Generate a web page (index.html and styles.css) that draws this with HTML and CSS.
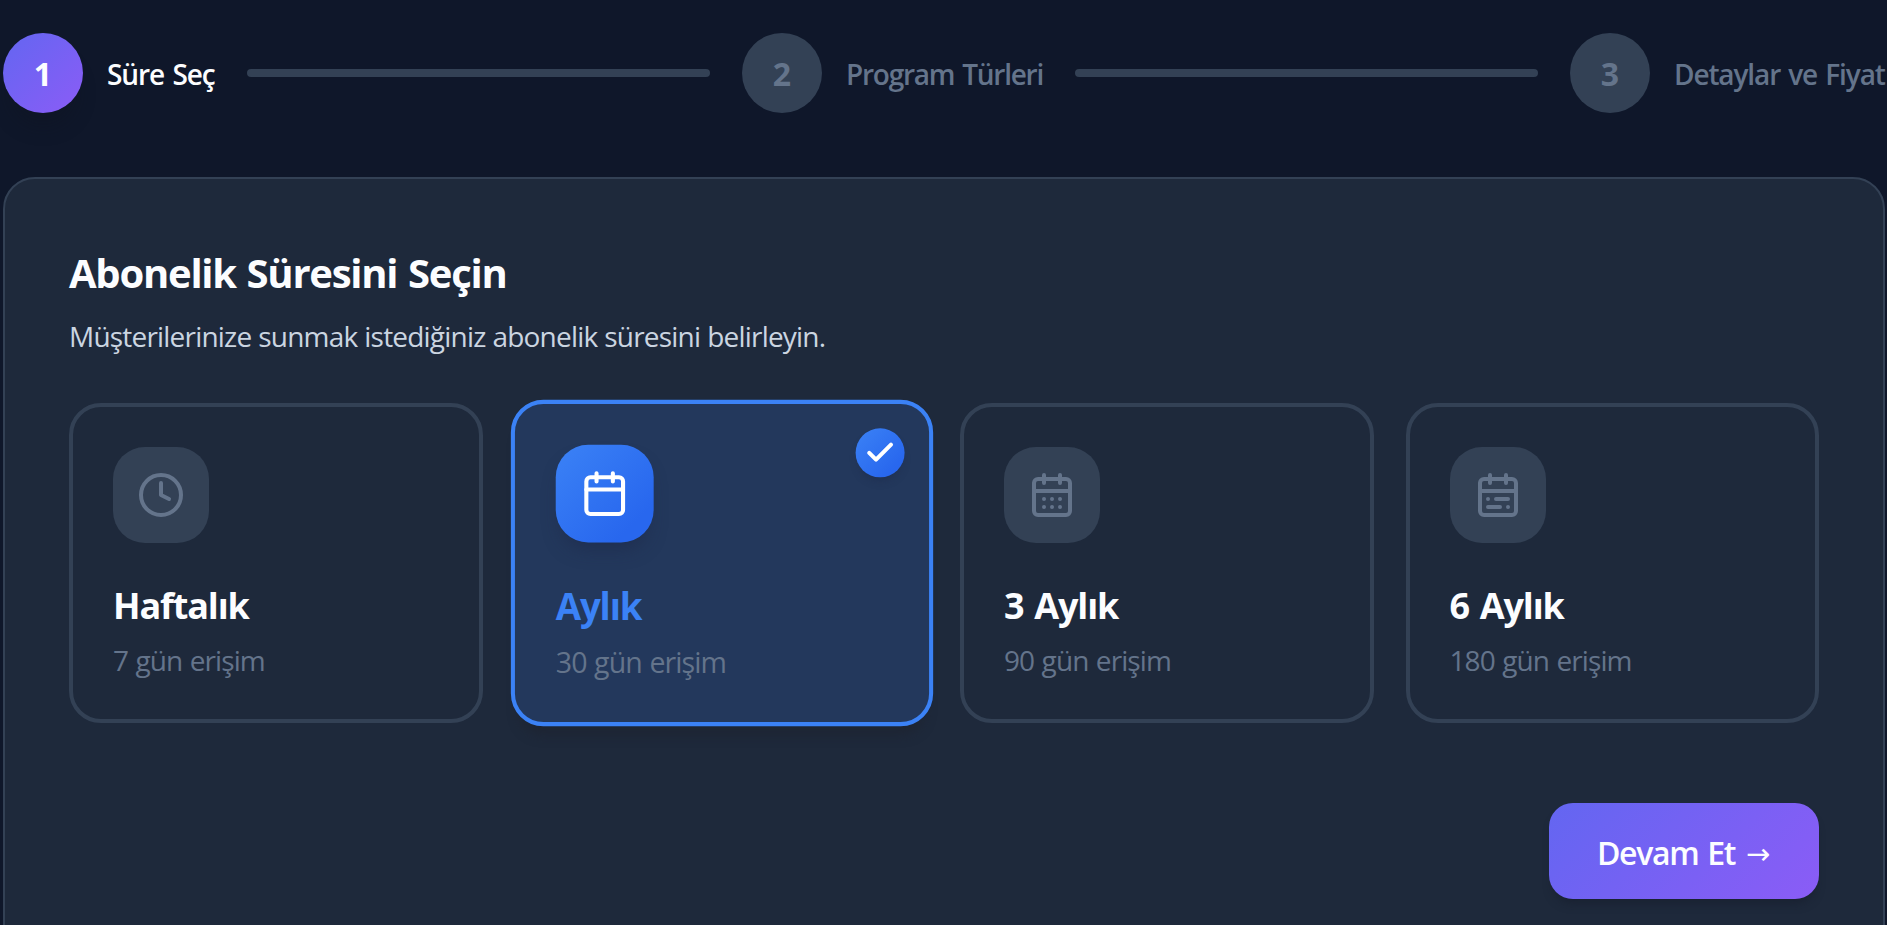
FILE: index.html
```html
<!DOCTYPE html>
<html lang="tr">
<head>
<meta charset="utf-8">
<title>Abonelik Süresi</title>
<link rel="stylesheet" href="styles.css">
</head>
<body>
<main class="wizard">
  <nav class="steps">
    <div class="step step-active"><span class="step-number">1</span><span class="step-label label-1">Süre Seç</span></div>
    <div class="step-line"></div>
    <div class="step"><span class="step-number">2</span><span class="step-label label-2">Program Türleri</span></div>
    <div class="step-line"></div>
    <div class="step"><span class="step-number">3</span><span class="step-label label-3">Detaylar ve Fiyat</span></div>
  </nav>
  <section class="panel">
    <h1 class="panel-title">Abonelik Süresini Seçin</h1>
    <p class="panel-text">Müşterilerinize sunmak istediğiniz abonelik süresini belirleyin.</p>
    <div class="plans">
      <article class="plan">
        <div class="plan-icon"><svg class="icon" viewBox="0 0 24 24"><circle cx="12" cy="12" r="10"/><path d="M12 6v6l4 2"/></svg></div>
        <h2 class="plan-title title-word">Haftalık</h2>
        <p class="plan-text">7 gün erişim</p>
      </article>
      <article class="plan plan-selected">
        <span class="badge"><svg class="icon-check" viewBox="0 0 24 24"><path d="M20 6 9 17l-5-5"/></svg></span>
        <div class="plan-icon"><svg class="icon" viewBox="0 0 24 24"><rect x="3" y="4" width="18" height="18" rx="2"/><path d="M8 2v4M16 2v4M3 10h18"/></svg></div>
        <h2 class="plan-title title-word">Aylık</h2>
        <p class="plan-text">30 gün erişim</p>
      </article>
      <article class="plan">
        <div class="plan-icon"><svg class="icon" viewBox="0 0 24 24"><rect x="3" y="4" width="18" height="18" rx="2"/><path d="M8 2v4M16 2v4M3 10h18M8 14h.01M12 14h.01M16 14h.01M8 18h.01M12 18h.01M16 18h.01"/></svg></div>
        <h2 class="plan-title">3 Aylık</h2>
        <p class="plan-text">90 gün erişim</p>
      </article>
      <article class="plan">
        <div class="plan-icon"><svg class="icon" viewBox="0 0 24 24"><rect x="3" y="4" width="18" height="18" rx="2"/><path d="M8 2v4M16 2v4M3 10h18M7 14h.01M11 14h6M7 18h6M17 18h.01"/></svg></div>
        <h2 class="plan-title">6 Aylık</h2>
        <p class="plan-text">180 gün erişim</p>
      </article>
    </div>
    <div class="actions">
      <button class="next" type="button"><span class="next-label">Devam Et</span><span class="arrow">→</span></button>
    </div>
  </section>
</main>
</body>
</html>
```
FILE: styles.css
```css
* { box-sizing: border-box; }
html, body { margin: 0; height: 100%; overflow: hidden; background: #0f172a; }
body { font-family: "Open Sans", "Noto Sans", sans-serif; color: #fcfdff; }
h1, h2, p { margin: 0; font-size: inherit; white-space: nowrap; }
.wizard { width: 1882px; margin-left: 3px; padding-top: 33px; }
.steps { display: flex; align-items: center; gap: 32px; height: 80px; margin-bottom: 64px; }
.step { display: flex; align-items: center; gap: 24px; color: #64748b; flex: none; }
.step-active { color: #fcfdff; }
.step-number { display: flex; align-items: center; justify-content: center; width: 80px; height: 80px; padding-top: 1px; border-radius: 50%; background: #334155; font-size: 32px; font-weight: 700; line-height: 44px; }
.step-active .step-number { background: linear-gradient(135deg, #6366f1, #8b5cf6); box-shadow: 0 20px 20px -8px rgba(16, 20, 32, .4); }
.step-label { padding-top: 2px; font-size: 28px; font-weight: 600; line-height: 40px; white-space: nowrap; letter-spacing: -1.25px; word-spacing: 2px; }
.label-1 { width: 108px; letter-spacing: -1.05px; }
.label-2 { width: 197px; }
.label-3 { width: 211px; letter-spacing: -1.12px; }
.step-line { flex: 1; height: 8px; border-radius: 4px; background: #334155; }
.panel { height: 790px; padding: 64px; border: 2px solid #334155; border-radius: 32px; background: #1e293b; }
.panel-title { font-size: 40px; font-weight: 700; line-height: 60px; letter-spacing: -1.24px; word-spacing: 1.5px; }
.panel-text { margin-top: 15px; font-size: 28px; line-height: 36px; letter-spacing: -.8px; word-spacing: .5px; color: #cbd5e1; }
.plans { display: grid; grid-template-columns: repeat(4, 1fr); gap: 32px; margin-top: 49px; }
.plan { position: relative; height: 320px; padding: 40px; border: 4px solid #334155; border-radius: 32px; }
.plan-icon { display: flex; align-items: center; justify-content: center; width: 96px; height: 96px; border-radius: 32px; background: #334155; color: #64748b; }
.icon { width: 48px; height: 48px; fill: none; stroke: currentColor; stroke-width: 2; stroke-linecap: round; stroke-linejoin: round; }
.plan-title { margin-top: 37px; font-size: 36px; font-weight: 700; line-height: 52px; letter-spacing: -1.1px; word-spacing: 2.5px; }
.title-word { letter-spacing: -1.15px; }
.plan-text { margin-top: 8px; font-size: 28px; line-height: 40px; letter-spacing: -.9px; word-spacing: 1px; color: #64748b; }
.plan-selected { border-color: #3b82f6; background: rgba(59, 130, 246, .18); transform: scale(1.02); box-shadow: 0 16px 10px -8px rgba(30, 35, 49, .7); }
.plan-selected .plan-icon { background: linear-gradient(135deg, #3b82f6, #2867ee 80%); color: #fff; box-shadow: 0 12px 18px -6px rgba(28, 38, 70, .5); }
.plan-selected .plan-title { color: #3b82f6; }
.badge { position: absolute; top: 24px; right: 24px; display: flex; align-items: center; justify-content: center; width: 48px; height: 48px; border-radius: 50%; background: linear-gradient(135deg, #3b82f6, #2867ee 80%); box-shadow: 0 6px 8px -3px rgba(28, 38, 70, .4); }
.icon-check { width: 32px; height: 32px; fill: none; stroke: #fff; stroke-width: 3; stroke-linecap: round; stroke-linejoin: round; }
.actions { display: flex; justify-content: flex-end; margin-top: 80px; }
.next { display: flex; align-items: center; gap: 11px; width: 270px; height: 96px; padding: 3px 0 0 48px; border: 0; border-radius: 24px; background: linear-gradient(135deg, #6366f1, #8b5cf6); box-shadow: 0 8px 10px -4px rgba(20, 26, 40, .5); color: #fcfdff; font: 600 32px/44px "Open Sans", "Noto Sans", sans-serif; }
.next-label { letter-spacing: -1.35px; word-spacing: 2px; }
.arrow { padding-top: 2px; font: 400 29px/44px "DejaVu Sans", sans-serif; }
```
